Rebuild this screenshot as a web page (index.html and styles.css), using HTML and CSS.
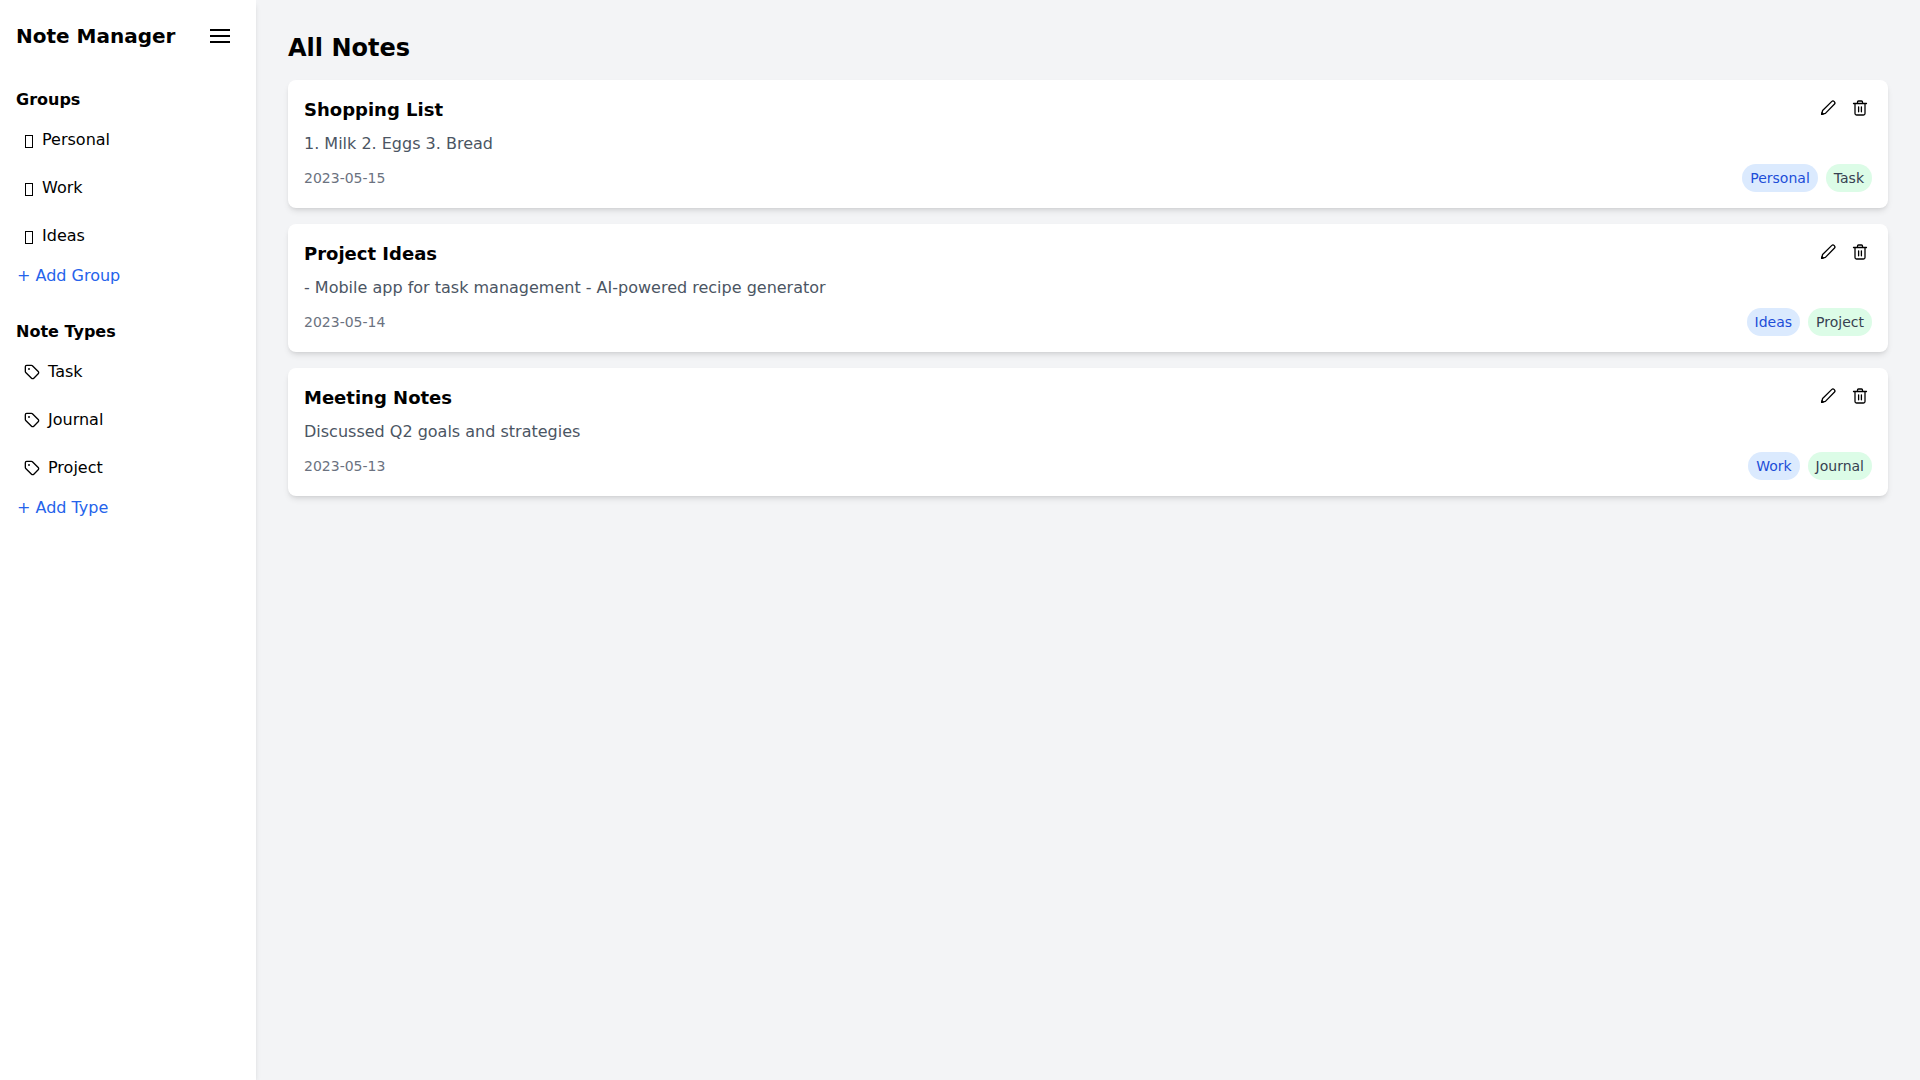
FILE: index.html
```html
<!DOCTYPE html>
<html lang="en">
<head>
<meta charset="utf-8">
<title>Note Manager</title>
<link rel="stylesheet" href="styles.css">
</head>
<body>
<div class="app">
  <aside class="sidebar">
    <div class="brand">
      <h1 class="brand-title">Note Manager</h1>
      <button class="icon-btn menu-btn" aria-label="Menu">
        <svg class="icon-24" viewBox="0 0 24 24" fill="none" stroke="currentColor" stroke-width="2"><path d="M2 6h20M2 12h20M2 18h20"/></svg>
      </button>
    </div>
    <section class="side-section">
      <h2 class="side-heading">Groups</h2>
      <ul class="side-list">
        <li class="side-item"><span class="tofu"></span><span>Personal</span></li>
        <li class="side-item"><span class="tofu"></span><span>Work</span></li>
        <li class="side-item"><span class="tofu"></span><span>Ideas</span></li>
      </ul>
      <a class="add-link">+ Add Group</a>
    </section>
    <section class="side-section">
      <h2 class="side-heading">Note Types</h2>
      <ul class="side-list">
        <li class="side-item"><svg class="icon-16" viewBox="0 0 24 24" fill="none" stroke="currentColor" stroke-width="2" stroke-linecap="round" stroke-linejoin="round"><path d="M12.6 2.6A2 2 0 0 0 11.2 2H4a2 2 0 0 0-2 2v7.2a2 2 0 0 0 .6 1.4l8.7 8.7a2.4 2.4 0 0 0 3.4 0l6.6-6.6a2.4 2.4 0 0 0 0-3.4z"/><circle cx="7.5" cy="7.5" r=".5" fill="currentColor"/></svg><span>Task</span></li>
        <li class="side-item"><svg class="icon-16" viewBox="0 0 24 24" fill="none" stroke="currentColor" stroke-width="2" stroke-linecap="round" stroke-linejoin="round"><path d="M12.6 2.6A2 2 0 0 0 11.2 2H4a2 2 0 0 0-2 2v7.2a2 2 0 0 0 .6 1.4l8.7 8.7a2.4 2.4 0 0 0 3.4 0l6.6-6.6a2.4 2.4 0 0 0 0-3.4z"/><circle cx="7.5" cy="7.5" r=".5" fill="currentColor"/></svg><span>Journal</span></li>
        <li class="side-item"><svg class="icon-16" viewBox="0 0 24 24" fill="none" stroke="currentColor" stroke-width="2" stroke-linecap="round" stroke-linejoin="round"><path d="M12.6 2.6A2 2 0 0 0 11.2 2H4a2 2 0 0 0-2 2v7.2a2 2 0 0 0 .6 1.4l8.7 8.7a2.4 2.4 0 0 0 3.4 0l6.6-6.6a2.4 2.4 0 0 0 0-3.4z"/><circle cx="7.5" cy="7.5" r=".5" fill="currentColor"/></svg><span>Project</span></li>
      </ul>
      <a class="add-link">+ Add Type</a>
    </section>
  </aside>
  <main class="main">
    <h2 class="page-title">All Notes</h2>
    <div class="notes">
      <article class="note">
        <div class="note-top">
          <h3 class="note-title">Shopping List</h3>
          <div class="note-actions">
            <button class="icon-btn" aria-label="Edit"><svg class="icon-16" viewBox="0 0 16 16" fill="none" stroke="currentColor" stroke-width="1.3" stroke-linejoin="round"><path d="M1.6 14.4l1-3.9L11.6 1.6a1.9 1.9 0 0 1 2.7 2.7L5.4 13.4z"/><path d="M1.6 14.4l1.6-.4-1.2-1.2z" fill="currentColor"/></svg></button>
            <button class="icon-btn" aria-label="Delete"><svg class="icon-16" viewBox="0 0 16 16" fill="none" stroke="currentColor" stroke-width="1.3" stroke-linecap="round" stroke-linejoin="round"><path d="M1.5 3.5h13M5.5 3.5V2a1 1 0 0 1 1-1h3a1 1 0 0 1 1 1v1.5M3 3.5v10A1.5 1.5 0 0 0 4.5 15h7a1.5 1.5 0 0 0 1.5-1.5v-10M6.6 6.8v5M9.4 6.8v5"/></svg></button>
          </div>
        </div>
        <p class="note-body">1. Milk 2. Eggs 3. Bread</p>
        <div class="note-foot">
          <span class="note-date">2023-05-15</span>
          <div class="chips"><span class="chip chip-blue">Personal</span><span class="chip chip-green">Task</span></div>
        </div>
      </article>
      <article class="note">
        <div class="note-top">
          <h3 class="note-title">Project Ideas</h3>
          <div class="note-actions">
            <button class="icon-btn" aria-label="Edit"><svg class="icon-16" viewBox="0 0 16 16" fill="none" stroke="currentColor" stroke-width="1.3" stroke-linejoin="round"><path d="M1.6 14.4l1-3.9L11.6 1.6a1.9 1.9 0 0 1 2.7 2.7L5.4 13.4z"/><path d="M1.6 14.4l1.6-.4-1.2-1.2z" fill="currentColor"/></svg></button>
            <button class="icon-btn" aria-label="Delete"><svg class="icon-16" viewBox="0 0 16 16" fill="none" stroke="currentColor" stroke-width="1.3" stroke-linecap="round" stroke-linejoin="round"><path d="M1.5 3.5h13M5.5 3.5V2a1 1 0 0 1 1-1h3a1 1 0 0 1 1 1v1.5M3 3.5v10A1.5 1.5 0 0 0 4.5 15h7a1.5 1.5 0 0 0 1.5-1.5v-10M6.6 6.8v5M9.4 6.8v5"/></svg></button>
          </div>
        </div>
        <p class="note-body">- Mobile app for task management - AI-powered recipe generator</p>
        <div class="note-foot">
          <span class="note-date">2023-05-14</span>
          <div class="chips"><span class="chip chip-blue">Ideas</span><span class="chip chip-green">Project</span></div>
        </div>
      </article>
      <article class="note">
        <div class="note-top">
          <h3 class="note-title">Meeting Notes</h3>
          <div class="note-actions">
            <button class="icon-btn" aria-label="Edit"><svg class="icon-16" viewBox="0 0 16 16" fill="none" stroke="currentColor" stroke-width="1.3" stroke-linejoin="round"><path d="M1.6 14.4l1-3.9L11.6 1.6a1.9 1.9 0 0 1 2.7 2.7L5.4 13.4z"/><path d="M1.6 14.4l1.6-.4-1.2-1.2z" fill="currentColor"/></svg></button>
            <button class="icon-btn" aria-label="Delete"><svg class="icon-16" viewBox="0 0 16 16" fill="none" stroke="currentColor" stroke-width="1.3" stroke-linecap="round" stroke-linejoin="round"><path d="M1.5 3.5h13M5.5 3.5V2a1 1 0 0 1 1-1h3a1 1 0 0 1 1 1v1.5M3 3.5v10A1.5 1.5 0 0 0 4.5 15h7a1.5 1.5 0 0 0 1.5-1.5v-10M6.6 6.8v5M9.4 6.8v5"/></svg></button>
          </div>
        </div>
        <p class="note-body">Discussed Q2 goals and strategies</p>
        <div class="note-foot">
          <span class="note-date">2023-05-13</span>
          <div class="chips"><span class="chip chip-blue">Work</span><span class="chip chip-green">Journal</span></div>
        </div>
      </article>
    </div>
  </main>
</div>
</body>
</html>
```
FILE: styles.css
```css
* { box-sizing: border-box; margin: 0; padding: 0; }
html, body { height: 100%; }
body { font-family: "DejaVu Sans", sans-serif; font-size: 16px; line-height: 24px; color: #000; background: #f3f4f6; }
.app { display: flex; height: 100vh; }
.sidebar { width: 256px; flex: none; background: #fff; padding: 16px; box-shadow: 0 4px 6px -1px rgba(0,0,0,.1), 0 2px 4px -2px rgba(0,0,0,.1); }
.brand { display: flex; align-items: center; justify-content: space-between; margin-bottom: 32px; }
.brand-title { font-size: 20px; line-height: 40px; font-weight: 700; }
.icon-btn { display: inline-flex; align-items: center; justify-content: center; background: none; border: 0; color: inherit; padding: 4px; }
.menu-btn { padding: 8px; }
.icon-24 { width: 24px; height: 24px; display: block; }
.icon-16 { width: 16px; height: 16px; display: block; flex: none; }
.side-section { margin-bottom: 32px; }
.side-heading { font-size: 16px; line-height: 24px; font-weight: 700; margin-bottom: 8px; }
.side-list { list-style: none; display: flex; flex-direction: column; gap: 8px; }
.side-item { display: flex; align-items: center; gap: 8px; padding: 4px 8px; height: 40px; }
.tofu { width: 8px; height: 13px; border: 1px solid #000; margin: 2px 1px 0; flex: none; }
.add-link { display: block; color: #2563eb; margin-top: 8px; padding: 0 1px; }
.main { flex: 1; min-width: 0; padding: 32px; }
.page-title { font-size: 24px; line-height: 32px; font-weight: 700; margin-bottom: 16px; }
.notes { display: flex; flex-direction: column; gap: 16px; }
.note { background: #fff; border-radius: 8px; padding: 16px; box-shadow: 0 4px 6px -1px rgba(0,0,0,.1), 0 2px 4px -2px rgba(0,0,0,.1); height: 128px; }
.note-top { display: flex; justify-content: space-between; align-items: flex-start; }
.note-title { font-size: 18px; line-height: 28px; font-weight: 700; }
.note-actions { display: flex; gap: 8px; }
.note-body { color: #4b5563; margin-top: 8px; }
.note-foot { display: flex; justify-content: space-between; align-items: center; margin-top: 8px; }
.note-date { font-size: 14px; line-height: 20px; color: #6b7280; }
.chips { display: flex; gap: 8px; }
.chip { font-size: 14px; line-height: 20px; padding: 4px 8px; border-radius: 9999px; }
.chip-blue { background: #dbeafe; color: #1d4ed8; }
.chip-green { background: #dcfce7; color: #374151; }
```
